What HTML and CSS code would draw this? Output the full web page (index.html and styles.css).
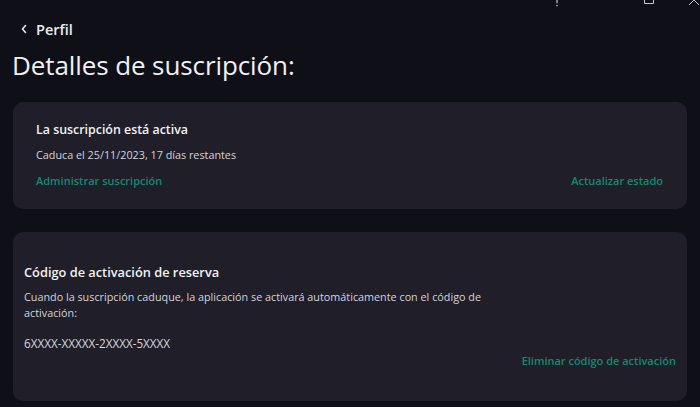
FILE: index.html
```html
<!DOCTYPE html>
<html lang="es">
<head>
<meta charset="utf-8">
<link rel="stylesheet" href="styles.css">
</head>
<body>
<div class="titlebar">
  <svg class="tb-help" width="10" height="7" viewBox="0 0 10 7"><path d="M5 0 V3.2" stroke="#c8c8cc" stroke-width="1.2" fill="none"/><circle cx="5" cy="5.6" r="0.8" fill="#c8c8cc"/></svg>
  <svg class="tb-max" width="12" height="7" viewBox="0 0 12 7"><path d="M1.5 -2 V3.5 H10.5 V-2" stroke="#c8c8cc" stroke-width="1" fill="none"/></svg>
  <svg class="tb-close" width="12" height="7" viewBox="0 0 12 7"><path d="M1 5 L6 0 L11 5" stroke="#c8c8cc" stroke-width="1" fill="none"/></svg>
</div>
<div class="back">
  <svg class="chev" width="8" height="10" viewBox="0 0 8 10"><path d="M5.5 1.5 L2.5 5 L5.5 8.5" stroke="#e8e8ec" stroke-width="1.6" fill="none" stroke-linecap="round" stroke-linejoin="round"/></svg>
  <span>Perfil</span>
</div>
<h1 class="page-title">Detalles de suscripción:</h1>
<section class="card card-status">
  <div class="card-title">La suscripción está activa</div>
  <div class="card-text">Caduca el 25/11/2023, 17 días restantes</div>
  <div class="links">
    <a class="link">Administrar suscripción</a>
    <a class="link">Actualizar estado</a>
  </div>
</section>
<section class="card card-backup">
  <div class="card-title big">Código de activación de reserva</div>
  <p class="card-text para">Cuando la suscripción caduque, la aplicación se activará automáticamente con el código de activación:</p>
  <div class="card-text code">6XXXX-XXXXX-2XXXX-5XXXX</div>
  <div class="links end">
    <a class="link">Eliminar código de activación</a>
  </div>
</section>
</body>
</html>
```
FILE: styles.css
```css
html, body {
  margin: 0;
  padding: 0;
  background: #0e0f17;
  width: 700px;
  height: 407px;
  overflow: hidden;
  font-family: "Open Sans", "Noto Sans", sans-serif;
  color: #e6e6ea;
}
.titlebar {
  height: 7px;
  display: flex;
  align-items: flex-start;
}
.tb-help { margin-left: 552px; }
.tb-max { margin-left: 81px; }
.tb-close { margin-left: 33px; }
.back {
  display: flex;
  align-items: center;
  gap: 8px;
  padding-left: 20px;
  margin-top: 13px;
  height: 18px;
  font-size: 14.5px;
  font-weight: 600;
  color: #ececf0;
}
.chev { display: block; }
.page-title {
  margin: 10px 0 0 12px;
  font-size: 26px;
  line-height: 34px;
  font-weight: 500;
  color: #f0f0f3;
  letter-spacing: -0.1px;
}
.card {
  background: #1f1e29;
  border-radius: 10px;
  margin: 0 13px;
  box-sizing: border-box;
}
.card-status {
  margin-top: 20px;
  height: 107px;
  padding: 19px 24px 0 23px;
}
.card-backup {
  margin-top: 23px;
  height: 169px;
  padding: 30px 11px 0 11px;
}
.card-title {
  font-size: 12.4px;
  line-height: 18px;
  font-weight: 600;
  color: #f2f2f5;
}
.card-title.big {
  font-size: 12.8px;
  line-height: 20px;
}
.card-text {
  font-size: 10.8px;
  line-height: 16px;
  color: #d4d4da;
  margin-top: 8px;
}
.para {
  margin: 7px 0 0;
  width: 470px;
}
.code {
  margin-top: 14px;
  font-size: 11.7px;
}
.links {
  display: flex;
  justify-content: space-between;
  margin-top: 10px;
  font-size: 11px;
  line-height: 16px;
}
.links.end {
  justify-content: flex-end;
  margin-top: 2px;
}
.link {
  color: #118a6f;
  font-weight: 600;
}
```
